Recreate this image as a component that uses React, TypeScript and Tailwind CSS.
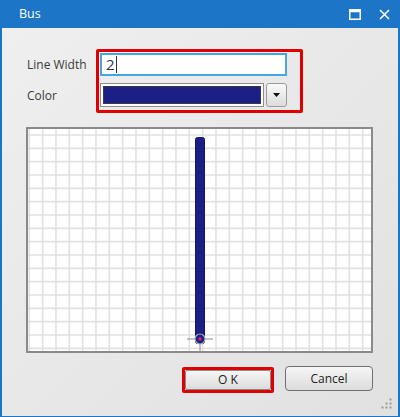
import React from "react";

const font = { fontFamily: '"Open Sans", "Noto Sans", "Liberation Sans", sans-serif' };

function Grid() {
    const w = 343;
    const h = 222;
    const step = 40 / 3;
    const xs: number[] = [];
    for (let x = 1.3; x < w; x += step) xs.push(x);
    const ys: number[] = [];
    for (let y = 6; y < h; y += step) ys.push(y);

    return (
        <svg width={w} height={h} className="block">
            <rect width={w} height={h} fill="#ffffff" />
            {xs.map((x) => (
                <line key={"v" + x} x1={x} x2={x} y1={0} y2={h} stroke="#e1e1e1" strokeWidth={1.6} />
            ))}
            {ys.map((y) => (
                <line key={"h" + y} x1={0} x2={w} y1={y} y2={y} stroke="#e1e1e1" strokeWidth={1.6} />
            ))}
            {/* bus line */}
            <rect x={167.5} y={8.5} width={9} height={206} rx={2} fill="#1b1f85" stroke="#12166a" strokeWidth={1} />
            {/* end point marker */}
            <line x1={159} x2={185} y1={210} y2={210} stroke="#8a8a8a" strokeWidth={1} />
            <line x1={172} x2={172} y1={210} y2={222} stroke="#8a8a8a" strokeWidth={1} />
            <circle cx={172} cy={210} r={5} fill="#1b1f85" stroke="#b0b0b0" strokeWidth={1.2} />
            <rect x={170.5} y={208.5} width={3} height={3} fill="#e0247c" />
        </svg>
    );
}

export default function App() {
    return (
        <div className="w-[400px] h-[417px] bg-[#1c75c7] flex flex-col px-[2px] pb-[1px]" style={font}>
            {/* Title bar */}
            <div className="h-[28px] shrink-0 flex items-center justify-between pl-[17px] pr-[6px]">
                <span className="text-white text-[12.5px] leading-none">Bus</span>
                <div className="flex items-center gap-[18px] pr-[2px]">
                    <svg width="12" height="11" viewBox="0 0 12 11">
                        <rect x="0.75" y="0.75" width="10.5" height="9.5" fill="none" stroke="#ffffff" strokeWidth="1.5" />
                        <rect x="0.75" y="0.75" width="10.5" height="2.5" fill="#ffffff" />
                    </svg>
                    <svg width="11" height="11" viewBox="0 0 11 11">
                        <path d="M1 1 L10 10 M10 1 L1 10" stroke="#ffffff" strokeWidth="1.6" />
                    </svg>
                </div>
            </div>

            {/* Content */}
            <div className="relative flex-1 bg-gradient-to-br from-[#efefef] to-[#e1e1e1] flex flex-col pl-[24px] pt-[21px]">
                {/* Form */}
                <div className="flex">
                    <div className="w-[70px] flex flex-col text-[12px] text-[#3a3a3a] pt-[1px]">
                        <div className="h-[30px] flex items-center pl-[1px]">Line Width</div>
                        <div className="h-[24px] mt-[4px] flex items-center pl-[1px]">Color</div>
                    </div>
                    <div className="w-[207px] h-[64px] border-[3px] border-[#e00000] rounded-[2px] pt-[1px] pl-[1px] flex flex-col gap-[7px]">
                        <div className="w-[187px] h-[23px] bg-white border-2 border-[#46a6e2] flex items-center pl-[4px]">
                            <span className="text-[15px] leading-none text-[#2c3550]">2</span>
                            <span className="w-[1px] h-[17px] bg-[#333] ml-[1px]" />
                        </div>
                        <div className="w-[187px] h-[24px] flex">
                            <div className="flex-1 border border-[#8c8c8c] bg-white p-[2px]">
                                <div className="h-full bg-[#1c1f86] border border-[#3a3a3a]" />
                            </div>
                            <div className="w-[21px] ml-[2px] rounded-[3px] border border-[#9a9a9a] bg-gradient-to-b from-[#fafafa] to-[#dcdcdc] flex items-center justify-center">
                                <svg width="7" height="4" viewBox="0 0 7 4">
                                    <path d="M0 0 L7 0 L3.5 4 Z" fill="#111" />
                                </svg>
                            </div>
                        </div>
                    </div>
                </div>

                {/* Canvas */}
                <div className="mt-[14px] w-[347px] h-[226px] border-2 border-[#8a8a8a]">
                    <Grid />
                </div>

                {/* Buttons */}
                <div className="w-[347px] flex justify-end items-start gap-[11px] mt-[13px]">
                    <div className="w-[92px] h-[26px] border-[3px] border-[#e00000] rounded-[2px] mt-[1px]">
                        <button className="w-full h-full rounded-[2px] border border-[#8a8a8a] bg-gradient-to-b from-[#f6f6f6] to-[#dcdcdc] text-[12px] text-[#222] leading-none flex items-center justify-center">
                            O K
                        </button>
                    </div>
                    <button className="w-[88px] h-[25px] rounded-[4px] border border-[#707070] bg-gradient-to-b from-[#f6f6f6] to-[#dcdcdc] text-[12px] text-[#222] leading-none flex items-center justify-center">
                        Cancel
                    </button>
                </div>

                {/* Resize grip */}
                <svg className="absolute right-[6px] bottom-[7px]" width="11" height="11" viewBox="0 0 11 11">
                    {[[9, 1], [9, 5], [5, 5], [9, 9], [5, 9], [1, 9]].map(([x, y]) => (
                        <rect key={`${x}-${y}`} x={x - 0.5} y={y - 0.5} width="2" height="2" fill="#9a9a9a" />
                    ))}
                </svg>
            </div>
        </div>
    );
}
